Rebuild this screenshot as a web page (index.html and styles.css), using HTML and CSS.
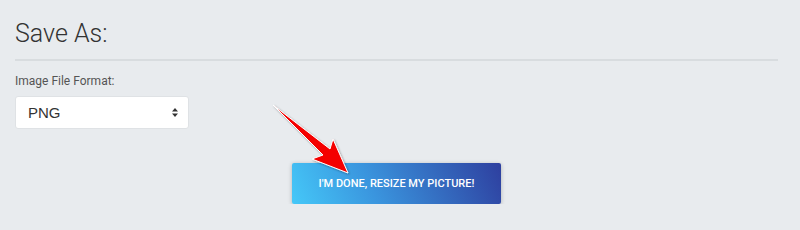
FILE: index.html
```html
<!DOCTYPE html>
<html>
<head>
<meta charset="utf-8">
<link rel="stylesheet" href="styles.css">
</head>
<body>
<div class="page">
  <h2 class="title">Save As:</h2>
  <div class="rule"></div>
  <label class="label">Image File Format:</label>
  <div class="select">
    <span class="select-value">PNG</span>
    <svg class="select-caret" width="6" height="9" viewBox="0 0 6 9"><path d="M0 3.5 L3 0 L6 3.5 Z M0 5.5 L3 9 L6 5.5 Z" fill="#333"/></svg>
  </div>
  <div class="actions">
    <button class="btn">I'M DONE, RESIZE MY PICTURE!</button>
  </div>
  <svg class="pointer" width="120" height="100" viewBox="0 0 120 100">
    <defs>
      <filter id="sh" x="-20%" y="-20%" width="140%" height="140%">
        <feDropShadow dx="1" dy="1" stdDeviation="1.2" flood-color="#000" flood-opacity="0.35"/>
      </filter>
    </defs>
    <polygon points="13,10 70,54 73,44 88,78 52,64 63,60" fill="#f40000" stroke="#fff" stroke-width="1" stroke-linejoin="round" filter="url(#sh)"/>
  </svg>
</div>
</body>
</html>
```

FILE: styles.css
```css
html, body {
  margin: 0;
  padding: 0;
  background: #e8ebee;
}
.page {
  position: relative;
  width: 763px;
  padding: 19px 22px 0 15px;
  font-family: Roboto, "Liberation Sans", sans-serif;
}
.title {
  margin: 0;
  font-size: 25px;
  line-height: 30px;
  font-weight: 300;
  color: #333;
}
.rule {
  margin-top: 10px;
  height: 2px;
  background: #d8dcdf;
}
.label {
  display: block;
  margin-top: 13px;
  font-size: 12px;
  line-height: 15px;
  color: #555;
}
.select {
  margin-top: 7px;
  width: 174px;
  height: 33px;
  box-sizing: border-box;
  background: #fff;
  border: 1px solid #dfe2e5;
  border-radius: 3px;
  display: flex;
  align-items: center;
  justify-content: space-between;
  padding: 0 10px 0 12px;
}
.select-value {
  font-size: 15px;
  color: #333;
  font-family: "Liberation Sans", Arial, sans-serif;
}
.actions {
  display: flex;
  justify-content: center;
  margin-top: 34px;
}
.btn {
  width: 209px;
  height: 41px;
  border: none;
  border-radius: 2px;
  background: linear-gradient(65deg, #45c8f8 0%, #3a95de 38%, #2e3f9f 100%);
  color: #fff;
  font-family: Roboto, "Liberation Sans", sans-serif;
  font-weight: 500;
  font-size: 11px;
  letter-spacing: 0;
  box-shadow: 0 1px 4px rgba(0,0,0,0.25);
  padding: 0;
}
.pointer {
  position: absolute;
  left: 260px;
  top: 95px;
}
```
